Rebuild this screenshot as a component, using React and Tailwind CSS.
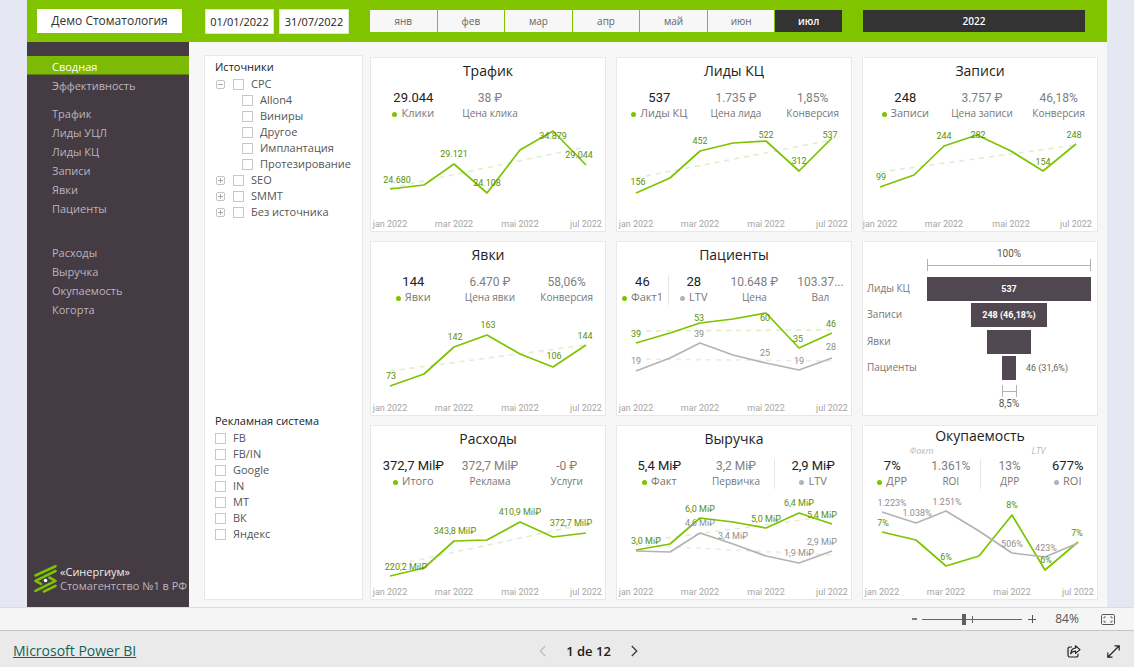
import React from "react";

const LINE = { green: "#7dc400", gray: "#b3b3b3" };
const TREND = { green: "#e1eecd", gray: "#ebebeb" };
const LABEL = { green: "#5d8f0c", gray: "#8f8f8f" };
const MONTH_X = [19, 53, 83, 116, 149, 182, 215];
const AXIS = [
  ["jan 2022", 0],
  ["mar 2022", 2],
  ["mai 2022", 4],
  ["jul 2022", 6],
];

const cards = [
  {
    title: "Трафик",
    cols: "grid-cols-3",
    kpis: [
      { value: "29.044", label: "Клики", main: true, dot: "green" },
      { value: "38 ₽", label: "Цена клика" },
    ],
    series: [
      {
        tone: "green",
        y: [64, 60, 39, 68, 25, 6, 40],
        trend: [63, 22],
        labels: [[26, 55, "24.680"], [83, 29, "29.121"], [116, 58, "24.108"], [182, 11, "34.879"], [208, 30, "29.044"]],
      },
    ],
  },
  {
    title: "Лиды КЦ",
    cols: "grid-cols-3",
    kpis: [
      { value: "537", label: "Лиды КЦ", main: true, dot: "green" },
      { value: "1.735 ₽", label: "Цена лида" },
      { value: "1,85%", label: "Конверсия" },
    ],
    series: [
      {
        tone: "green",
        y: [68, 53, 26, 18, 16, 46, 13],
        trend: [53, 15],
        labels: [[21, 57, "156"], [83, 16, "452"], [149, 10, "522"], [182, 36, "312"], [213, 10, "537"]],
      },
    ],
  },
  {
    title: "Записи",
    cols: "grid-cols-3",
    x: [17, 51, 81, 114, 148, 180, 213],
    kpis: [
      { value: "248", label: "Записи", main: true, dot: "green" },
      { value: "3.757 ₽", label: "Цена записи" },
      { value: "46,18%", label: "Конверсия" },
    ],
    series: [
      {
        tone: "green",
        y: [62, 50, 21, 10, 26, 46, 19],
        trend: [47, 20],
        labels: [[18, 52, "99"], [81, 11, "244"], [115, 10, "282"], [180, 37, "154"], [211, 10, "248"]],
      },
    ],
  },
  {
    title: "Явки",
    cols: "grid-cols-3",
    kpis: [
      { value: "144", label: "Явки", main: true, dot: "green" },
      { value: "6.470 ₽", label: "Цена явки" },
      { value: "58,06%", label: "Конверсия" },
    ],
    series: [
      {
        tone: "green",
        y: [77, 65, 38, 26, 45, 58, 36],
        trend: [62, 36],
        labels: [[20, 67, "73"], [84, 28, "142"], [117, 16, "163"], [183, 47, "106"], [214, 27, "144"]],
      },
    ],
  },
  {
    title: "Пациенты",
    cols: "grid-cols-[5fr_5fr_7fr_6fr]",
    kpis: [
      { value: "46", label: "Факт1", main: true, dot: "green" },
      { value: "28", label: "LTV", main: true, dot: "gray", divider: true },
      { value: "10.648 ₽", label: "Цена" },
      { value: "103.37...", label: "Вал" },
    ],
    series: [
      {
        tone: "gray",
        y: [62, 49, 34, 46, 54, 61, 49],
        trend: [50, 52],
        labels: [[19, 52, "19"], [82, 25, "39"], [148, 44, "25"], [182, 52, "19"], [214, 38, "28"]],
      },
      {
        tone: "green",
        y: [34, 24, 14, 10, 4, 39, 24],
        trend: [22, 21],
        labels: [[19, 25, "39"], [82, 9, "53"], [148, 9, "60"], [181, 30, "35"], [214, 15, "46"]],
      },
    ],
  },
  { funnel: true, title: "Воронка" },
  {
    title: "Расходы",
    cols: "grid-cols-3",
    kpis: [
      { value: "372,7 Mil₽", label: "Итого", main: true, dot: "green" },
      { value: "372,7 Mil₽", label: "Реклама" },
      { value: "-0 ₽", label: "Услуги" },
    ],
    series: [
      {
        tone: "green",
        y: [83, 75, 48, 47, 29, 44, 40],
        trend: [73, 31],
        labels: [[35, 74, "220,2 Mil₽"], [84, 38, "343,8 Mil₽"], [149, 19, "410,9 Mil₽"], [200, 30, "372,7 Mil₽"]],
      },
    ],
  },
  {
    title: "Выручка",
    cols: "grid-cols-3",
    kpis: [
      { value: "5,4 Mi₽", label: "Факт", main: true, dot: "green" },
      { value: "3,2 Mi₽", label: "Первичка" },
      { value: "2,9 Mi₽", label: "LTV", main: true, dot: "gray", divider: true },
    ],
    series: [
      {
        tone: "gray",
        y: [58, 59, 40, 51, 63, 70, 58],
        trend: [52, 62],
        labels: [[83, 30, "4,6 Mi₽"], [116, 43, "3,4 Mi₽"], [182, 60, "1,9 Mi₽"], [205, 49, "2,9 Mi₽"]],
      },
      {
        tone: "green",
        y: [57, 51, 25, 29, 35, 20, 31],
        trend: [49, 23],
        labels: [[29, 48, "3,0 Mi₽"], [83, 16, "6,0 Mi₽"], [149, 26, "5,0 Mi₽"], [182, 10, "6,4 Mi₽"], [205, 22, "5,4 Mi₽"]],
      },
    ],
  },
  {
    title: "Окупаемость",
    cols: "grid-cols-4",
    notes: ["Факт", "LTV"],
    kpis: [
      { value: "7%", label: "ДРР", main: true, dot: "green" },
      { value: "1.361%", label: "ROI" },
      { value: "13%", label: "ДРР", divider: true },
      { value: "677%", label: "ROI", main: true, dot: "gray" },
    ],
    series: [
      {
        tone: "green",
        y: [39, 47, 73, 63, 22, 77, 49],
        labels: [[20, 30, "7%"], [83, 64, "6%"], [149, 12, "8%"], [183, 67, "6%"], [214, 40, "7%"]],
      },
      {
        tone: "gray",
        y: [19, 30, 18, 38, 60, 64, 50],
        labels: [[29, 10, "1.223%"], [54, 20, "1.038%"], [84, 9, "1.251%"], [149, 51, "506%"], [183, 55, "423%"]],
      },
    ],
  },
];

function LineChart({ series, x = MONTH_X, title }) {
  return (
    <svg
      viewBox="0 0 234 106"
      className="block w-full font-['Roboto','Noto_Sans',sans-serif]"
      role="img"
      aria-label={title}
    >
      {series.map(
        (s) =>
          s.trend && (
            <line
              key={s.tone}
              x1={x[0]}
              y1={s.trend[0]}
              x2={x[6]}
              y2={s.trend[1]}
              stroke={TREND[s.tone]}
              strokeWidth="1.6"
              strokeDasharray="5 5"
            />
          )
      )}
      {series.map((s) => (
        <polyline
          key={s.tone}
          points={s.y.map((v, i) => `${x[i]},${v}`).join(" ")}
          fill="none"
          stroke={LINE[s.tone]}
          strokeWidth="1.7"
          strokeLinejoin="round"
        />
      ))}
      {series.map((s) =>
        s.labels.map(([lx, ly, text]) => (
          <text key={`${s.tone}-${lx}`} x={lx} y={ly + 3} textAnchor="middle" fontSize="9" fill={LABEL[s.tone]}>
            {text}
          </text>
        ))
      )}
      {AXIS.map(([text, i]) => (
        <text key={text} x={x[i]} y="102" textAnchor="middle" fontSize="9" fill="#a6a6a6">
          {text}
        </text>
      ))}
    </svg>
  );
}

const stages = [
  { name: "Лиды КЦ", x: 64, w: 164, y: 35, text: "537" },
  { name: "Записи", x: 108, w: 76, y: 61, text: "248 (46,18%)" },
  { name: "Явки", x: 124, w: 44, y: 88 },
  { name: "Пациенты", x: 139, w: 14, y: 114, text: "46 (31,6%)", outside: true },
];

function Funnel() {
  return (
    <svg viewBox="0 0 234 173" className="block w-full" role="img" aria-label="Воронка">
      <g fontSize="10" textAnchor="middle" fill="#555" className="font-['Roboto',sans-serif]">
        <text x="146" y="15">100%</text>
        <text x="146" y="165">8,5%</text>
      </g>
      <path
        d="M64.5 17v12M227.5 17v12M64 23.5h164M139.500 143v12M153.500 143v12M139 149.500h14"
        stroke="#b3b3b3"
        fill="none"
      />
      {stages.map((s) => (
        <g key={s.name}>
          <text x="4" y={s.y + 15} fontSize="10" fill="#777">
            {s.name}
          </text>
          <rect x={s.x} y={s.y} width={s.w} height="24" fill="#504751" />
          {s.text && (
            <text
              x={s.outside ? 184 : 146}
              y={s.y + 15}
              fontSize="9"
              textAnchor="middle"
              fill={s.outside ? "#666" : "#fff"}
              className={s.outside ? "font-['Roboto',sans-serif]" : "font-['Roboto',sans-serif] font-bold"}
            >
              {s.text}
            </text>
          )}
        </g>
      ))}
    </svg>
  );
}

function Kpi({ value, label, main, dot, divider }) {
  return (
    <div className={`min-w-0 text-center whitespace-nowrap ${divider ? "border-l border-[#e6e6e6]" : ""}`}>
      <div
        className={`font-['Roboto','Noto_Sans',sans-serif] leading-[14px] ${
          main ? "text-[13px] text-[#222]" : "text-[12px] text-[#808080]"
        }`}
      >
        {value}
      </div>
      <div
        className={`flex items-center justify-center gap-1 leading-4 text-[#777] ${
          main ? "text-[11px]" : "text-[10px]"
        }`}
      >
        {dot && <span className={`mt-0.5 size-[5px] rounded-full ${dot === "green" ? "bg-[#7dc400]" : "bg-[#b3b3b3]"}`} />}
        {label}
      </div>
    </div>
  );
}

function Card({ card }) {
  if (card.funnel) {
    return (
      <section className="border border-[#e8e8e8] bg-white">
        <Funnel />
      </section>
    );
  }
  return (
    <section className="border border-[#e8e8e8] bg-white">
      <h2 className={`text-center text-[14px] text-[#222] ${card.notes ? "leading-5" : "leading-[26px]"}`}>{card.title}</h2>
      {card.notes && (
        <div className="grid grid-cols-2 text-center text-[9px] leading-[10px] text-[#bbb] italic">
          {card.notes.map((n) => (
            <span key={n}>{n}</span>
          ))}
        </div>
      )}
      <div className={`grid pb-1 ${card.cols} ${card.notes ? "pt-[3px]" : "pt-[7px]"} ${card.kpis.length < 4 ? "pl-1" : ""}`}>
        {card.kpis.map((k, i) => (
          <Kpi key={i} {...k} />
        ))}
      </div>
      <LineChart series={card.series} x={card.x} title={card.title} />
    </section>
  );
}

const navGroups = [
  ["Сводная", "Эффективность"],
  ["Трафик", "Лиды УЦЛ", "Лиды КЦ", "Записи", "Явки", "Пациенты"],
  ["Расходы", "Выручка", "Окупаемость", "Когорта"],
];

function Logo() {
  return (
    <svg viewBox="0 0 24 28" className="h-7 w-6 shrink-0" aria-hidden="true">
      <g fill="none" stroke="#7dc400" strokeWidth="2.600" strokeLinecap="round" strokeLinejoin="round">
        <path d="M1.500 10.500 21.500 1.200" />
        <path d="M21.500 6 1.500 15.800 7 18.800" />
        <path d="M15.500 12.600 21.500 15.800 1.500 25.800" />
        <path d="M21.500 20.800 10 26.500" />
      </g>
      <circle cx="11.500" cy="15.500" r="1.800" fill="#fff" />
    </svg>
  );
}

function Sidebar() {
  return (
    <aside className="flex w-[162px] shrink-0 flex-col justify-between bg-[#443b43] pt-[14px] pb-[14px]">
      <nav className="flex flex-col text-[11px] text-[#bdb4be]">
        {navGroups.map((group, g) => (
          <div key={g} className={`flex flex-col ${g === 1 ? "mt-[9px]" : g === 2 ? "mt-[25px]" : ""}`}>
            {group.map((item) => (
              <a
                key={item}
                href="#"
                className={`h-[19px] pl-[25px] leading-[21px] ${
                  item === "Сводная" ? "border-b border-[#5d7d1a] bg-[#7dba05] text-white" : ""
                }`}
              >
                {item}
              </a>
            ))}
          </div>
        ))}
      </nav>
      <div className="flex items-center gap-0.5 pl-[7px] whitespace-nowrap">
        <Logo />
        <div className="text-[11px] leading-[14px] text-[#bdb4be]">
          <div className="text-[#eee]">«Синергиум»</div>
          <div>Стомагентство №1 в РФ</div>
        </div>
      </div>
    </aside>
  );
}

function Check({ label, className = "" }) {
  return (
    <label className={`flex h-4 items-center gap-[7px] whitespace-nowrap ${className}`}>
      <input type="checkbox" className="size-[11px] shrink-0 appearance-none border border-[#c8c8c8] bg-white" />
      {label}
    </label>
  );
}

function Toggle({ open, name }) {
  return (
    <button type="button" aria-label={name} aria-expanded={open} className="size-[9px] shrink-0">
      <svg viewBox="0 0 9 9" className="block size-full" fill="none" stroke="#a8a8a8">
        <rect x="0.5" y="0.5" width="8" height="8" rx="1.500" stroke="#c4c4c4" />
        <path d={open ? "M2 4.500h5" : "M2 4.500h5M4.500 2v5"} />
      </svg>
    </button>
  );
}

function Filters() {
  const children = ["Allon4", "Виниры", "Другое", "Имплантация", "Протезирование"];
  return (
    <div className="flex w-[159px] shrink-0 flex-col border border-[#e8e8e8] bg-white pl-2.5 text-[11px] text-[#555]">
      <fieldset className="h-[354px] pt-0.5">
        <legend className="float-left w-full leading-[18px] text-[#222]">Источники</legend>
        <div className="clear-both">
          <div className="flex items-center gap-2 pl-px">
            <Toggle open name="CPC" />
            <Check label="CPC" />
          </div>
          {children.map((c) => (
            <Check key={c} label={c} className="pl-[27px]" />
          ))}
          {["SEO", "SMMT", "Без источника"].map((c) => (
            <div key={c} className="flex items-center gap-2 pl-px">
              <Toggle open={false} name={c} />
              <Check label={c} />
            </div>
          ))}
        </div>
      </fieldset>
      <fieldset className="pt-0.5">
        <legend className="float-left w-full leading-[18px] text-[#222]">Рекламная система</legend>
        <div className="clear-both">
          {["FB", "FB/IN", "Google", "IN", "MT", "ВК", "Яндекс"].map((c) => (
            <Check key={c} label={c} />
          ))}
        </div>
      </fieldset>
    </div>
  );
}

function Header() {
  const months = ["янв", "фев", "мар", "апр", "май", "июн", "июл"];
  return (
    <header className="flex h-[42px] items-center bg-[#80c400] pr-[22px] pl-2.5">
      <div className="w-[145px] shrink-0 bg-white text-center text-[12px] leading-6 text-[#333]">Демо Стоматология</div>
      <div className="ml-[23px] flex shrink-0 gap-[5px]">
        <input
          aria-label="Начало периода"
          defaultValue="01/01/2022"
          className="h-[25px] w-[69px] border border-[#dde8c4] bg-white text-center text-[11px] text-[#222]"
        />
        <input
          aria-label="Конец периода"
          defaultValue="31/07/2022"
          className="h-[25px] w-[70px] border border-[#dde8c4] bg-white text-center text-[11px] text-[#222]"
        />
      </div>
      <div className="ml-[21px] flex flex-[472] gap-px">
        {months.map((m) => (
          <button
            key={m}
            type="button"
            className={`h-[22px] flex-1 text-[10px] ${
              m === "июл" ? "bg-[#333] font-semibold text-white" : "bg-[#f7f7f7] text-[#666]"
            }`}
          >
            {m}
          </button>
        ))}
      </div>
      <div className="ml-[21px] flex flex-[222]">
        <button type="button" className="h-[22px] flex-1 bg-[#333] text-[10px] font-semibold text-white">
          2022
        </button>
      </div>
    </header>
  );
}

function ZoomBar() {
  return (
    <div className="flex h-[23px] items-center justify-end border-t border-[#dcdcdc] bg-[#f5f5f5] pr-[19px] text-[#555]">
      <button type="button" aria-label="Уменьшить" className="flex w-3 justify-center">
        <svg viewBox="0 0 5 8" className="h-2 w-[5px]" stroke="#555" strokeWidth="1.500">
          <path d="M0 4h5" />
        </svg>
      </button>
      <div className="relative ml-0.5 flex h-3 w-[100px] items-center">
        <span className="absolute top-[3px] left-[50px] h-[7px] w-px bg-[#666]" />
        <input
          type="range"
          aria-label="Масштаб"
          defaultValue="42"
          className="h-3 w-full appearance-none bg-transparent [&::-webkit-slider-runnable-track]:h-px [&::-webkit-slider-runnable-track]:bg-[#666] [&::-webkit-slider-thumb]:-mt-[5px] [&::-webkit-slider-thumb]:h-[11px] [&::-webkit-slider-thumb]:w-1 [&::-webkit-slider-thumb]:appearance-none [&::-webkit-slider-thumb]:bg-[#606060]"
        />
      </div>
      <button type="button" aria-label="Увеличить" className="ml-1 flex w-3 justify-center">
        <svg viewBox="0 0 8 8" className="size-2" stroke="#555">
          <path d="M0 4.500h8M4.500 0v8" />
        </svg>
      </button>
      <span className="ml-[17px] w-6 text-center text-[12px]">84%</span>
      <button type="button" aria-label="По размеру страницы" className="ml-[22px]">
        <svg viewBox="0 0 14 11" className="block h-[11px] w-3.5" fill="none" stroke="#555">
          <rect x="0.5" y="0.5" width="13" height="10" rx="1.200" />
          <path d="M3 4.500V3h1.800M9.200 3H11v1.500M11 6.500V8H9.200M4.800 8H3V6.500" strokeWidth="0.9" />
        </svg>
      </button>
    </div>
  );
}

function Footer() {
  return (
    <footer className="grid h-[37px] grid-cols-3 items-center border-t border-[#c6c6c6] bg-[#eaeaea] pt-1 pr-3.5 pl-[13px]">
      <a href="#" className="text-[14px] leading-5 text-[#0f6460] underline">
        Microsoft Power BI
      </a>
      <div className="flex items-center justify-center gap-5 pl-11">
        <button type="button" aria-label="Предыдущая страница" disabled>
          <svg viewBox="0 0 7 12" className="h-3 w-[7px]" fill="none" stroke="#bdbdbd" strokeWidth="1.200">
            <path d="M6.200 1 1.200 6l5 5" />
          </svg>
        </button>
        <span className="text-[13px] leading-5 font-semibold text-[#1a1a1a]">1 de 12</span>
        <button type="button" aria-label="Следующая страница">
          <svg viewBox="0 0 7 12" className="h-3 w-[7px]" fill="none" stroke="#333" strokeWidth="1.200">
            <path d="m0.800 1 5 5-5 5" />
          </svg>
        </button>
      </div>
      <div className="flex items-center justify-end gap-[26px]">
        <button type="button" aria-label="Поделиться">
          <svg viewBox="0 0 14 13" className="block h-[13px] w-3.5" fill="none" stroke="#222" strokeWidth="1.200" strokeLinejoin="round">
            <path d="M5 2H2.800A1.800 1.800 0 0 0 1 3.800v6.400A1.800 1.800 0 0 0 2.800 12h6.400a1.800 1.800 0 0 0 1.800-1.800V8.800" />
            <path d="M8.500 0.800 13 4.600 8.500 8.400V6.200C6 6.200 4.800 7 3.800 8.800 3.900 5.500 5.500 3.200 8.500 3Z" />
          </svg>
        </button>
        <button type="button" aria-label="Во весь экран">
          <svg viewBox="0 0 13 13" className="block size-[13px]" fill="none" stroke="#222" strokeWidth="1.200">
            <path d="M1 12 12 1M7.500 0.800h4.700v4.700M0.800 7.500v4.700h4.700" />
          </svg>
        </button>
      </div>
    </footer>
  );
}

export default function App() {
  return (
    <div className="flex min-h-screen flex-col bg-[#e5e8f2] font-['Open_Sans','Noto_Sans',sans-serif]">
      <main className="flex flex-1 flex-col px-[27px]">
        <Header />
        <div className="flex flex-1 bg-[#f7f7f7]">
          <Sidebar />
          <div className="flex min-w-0 flex-1 gap-[7px] pt-[13px] pr-[9px] pb-[7px] pl-[15px]">
            <Filters />
            <div className="grid min-w-0 flex-1 grid-cols-3 content-start gap-x-2.5 gap-y-[9px] pt-0.5">
              {cards.map((c) => (
                <Card key={c.title} card={c} />
              ))}
            </div>
          </div>
        </div>
      </main>
      <ZoomBar />
      <Footer />
    </div>
  );
}
